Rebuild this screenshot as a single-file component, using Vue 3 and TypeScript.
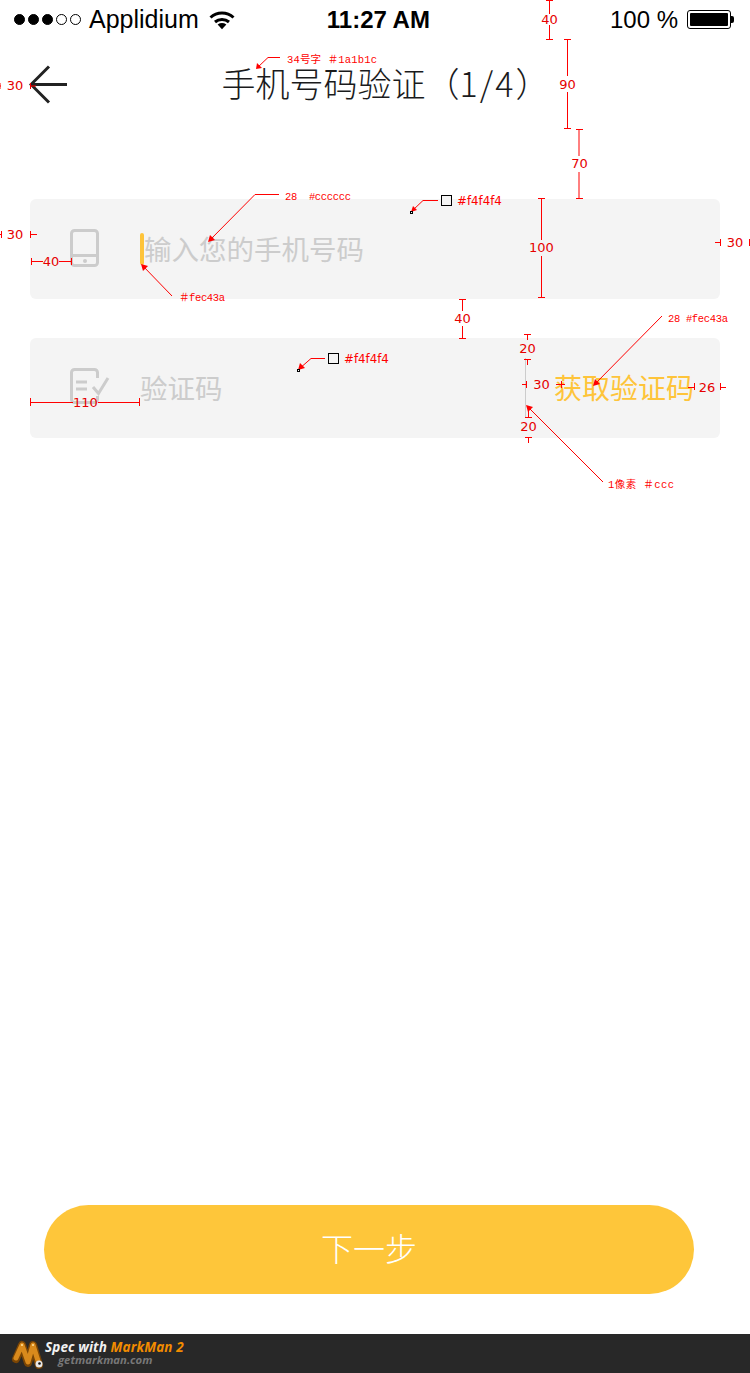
<template>
  <div class="page">
    <div class="status-bar">
      <div class="signal">
        <i v-for="n in 3" :key="'on' + n" class="dot on"></i>
        <i v-for="n in 2" :key="'off' + n" class="dot"></i>
      </div>
      <span class="carrier">Applidium</span>
      <svg class="wifi" width="26" height="20" viewBox="0 0 26 20">
        <path d="M1.5 7.5C8 1.5 18 1.5 24.5 7.5" />
        <path d="M6 12C10 8.5 16 8.5 20 12" />
        <path class="wifi-tip" d="M8.6 14.4C11.5 12.6 14.5 12.6 17.4 14.4L13 19.2Z" />
      </svg>
      <span class="time">11:27 AM</span>
      <span class="percent">100 %</span>
      <div class="battery"><div class="battery-fill"></div></div>
      <div class="battery-nub"></div>
    </div>

    <div class="nav">
      <svg class="back" width="40" height="40" viewBox="0 0 40 40">
        <path d="M20 1.5L2 19.5L20 37.5M2 19.5H38" />
      </svg>
      <h1 class="title">手机号码验证（<span class="title-step">1/4</span>）</h1>
    </div>

    <div class="form">
      <div class="field">
        <svg class="field-icon" width="40" height="40" viewBox="0 0 40 40">
          <rect x="1.5" y="1.5" width="26" height="35" rx="3" />
          <path d="M1.5 26.5H27.5" />
          <circle class="icon-dot" cx="15" cy="32" r="2" />
        </svg>
        <i class="cursor"></i>
        <span class="placeholder">输入您的手机号码</span>
      </div>
      <div class="field">
        <svg class="field-icon" width="40" height="40" viewBox="0 0 40 40">
          <path d="M27.5 10V4.5a3 3 0 0 0-3-3H4.5a3 3 0 0 0-3 3V31.500a3 3 0 0 0 3 3H24.500a3 3 0 0 0 3-3V28" />
          <path d="M6 14H17M6 21H17M23 19L28.500 25.500L38 10" />
        </svg>
        <span class="placeholder code">验证码</span>
        <div class="divider"></div>
        <span class="get-code">获取验证码</span>
      </div>
    </div>

    <div class="spacer"></div>
    <button class="next" type="button">下一步</button>

    <div class="markman">
      <svg class="mm-logo" width="34" height="30" viewBox="0 0 34 30">
        <path class="mm-shadow" d="M6 20L12 6L18 24L23 6L29 26" />
        <path class="mm-body" d="M6 19L12 6L18 23L23 6L29 25" />
        <circle class="mm-rivet" cx="12" cy="6" r="1" />
        <circle class="mm-rivet" cx="23" cy="6" r="1" />
        <circle class="mm-eye" cx="29" cy="25" r="3.500" />
        <circle class="mm-pupil" cx="29.500" cy="24.500" r="1.300" />
      </svg>
      <div class="mm-text">
        <div class="mm-line">Spec with <span class="mm-name">MarkMan 2</span></div>
        <div class="mm-site">getmarkman.com</div>
      </div>
    </div>

    <!-- spec annotations sit on top of the screen -->
    <svg class="marks" width="750" height="1373" viewBox="0 0 750 1373">
      <path class="mark" :d="dimensionPath" />
      <path class="mark" :d="leaderPath" />
      <polygon v-for="(a, i) in arrowHeads" :key="'a' + i" class="head" :points="a" />
      <text v-for="d in dimensionLabels" :key="d.x + '-' + d.y" class="dim-label" :x="d.x" :y="d.y">{{ d.text }}</text>
      <text v-for="n in notes" :key="n.text + n.x" class="note" :x="n.x" :y="n.y" :textLength="n.width" lengthAdjust="spacing">{{ n.text }}</text>
      <rect class="swatch" x="441.500" y="195.500" width="10" height="10" />
      <rect class="swatch" x="328.500" y="353.500" width="10" height="10" />
      <rect class="pin" x="410.500" y="211.500" width="2" height="2" />
      <rect class="pin" x="297.500" y="369.500" width="2" height="2" />
      <text class="hex" x="457" y="205">#f4f4f4</text>
      <text class="hex" x="344" y="363">#f4f4f4</text>
    </svg>
  </div>
</template>

<script setup lang="ts">
interface Label {
  x: number
  y: number
  text: string
  width?: number
}

const dimensionPath = [
  // top column of heights
  'M549.500 0V14M549.500 25V39M546 39.500H553M546 0.500H553',
  'M567.500 40V76M567.500 92V128M564 39.500H571M564 128.500H571',
  'M579 129V156M579 172V198M576 129.500H583M576 198.500H583',
  'M541.500 198V240M541.500 256V297M538 198.500H545M538 297.500H545',
  'M462.500 299V311M462.500 326V338M459 299.500H466M459 338.500H466',
  // get-code box
  'M527.500 334V340M524 334.500H531M527.500 359V365M524 359.500H531',
  'M528.500 408V417M525 417.500H532M528.500 437V443M525 437.500H532',
  'M526.500 381V388M522 384.500H526.500M561.500 381V388M556 384.500H565',
  'M694.500 383V390M688 387.500H694.500M720.500 383V390M720.500 387.500H726',
  // left and right margins
  'M0 83V89M0 86H1M30.500 83V89M30.500 86H36',
  'M1.500 231V238M0 234.500H1.500M30.500 231V238M30.500 234.500H37',
  'M31.500 258V265M31.500 261.500H43M59 261.500H71M71.500 258V265',
  'M30.500 398V406M30.500 402.500H73M98 402.500H139M139.500 398V406',
  'M720.500 239V246M715 242.500H720.500M749.500 239V246',
].join('')

const leaderPath = [
  'M280 57.500H268L257 68',
  'M279 194.500H255L209 241',
  'M172 296L142 265',
  'M438 200.500H423L412 211',
  'M325 358.500H311L299 369',
  'M662 316L594 385',
  'M603 482L527 406',
].join('')

const arrowHeads = [
  '256,69 257,63 262,68',
  '208,242 210,235 215,240',
  '141,264 148,266 143,271',
  '411,212 413,206 417,210',
  '298,370 300,363 305,368',
  '593,386 595,379 600,384',
  '526,405 533,407 528,412',
]

const dimensionLabels: Label[] = [
  { x: 549.5, y: 24, text: '40' },
  { x: 567.5, y: 89, text: '90' },
  { x: 579.5, y: 168, text: '70' },
  { x: 541.5, y: 252, text: '100' },
  { x: 462.5, y: 323, text: '40' },
  { x: 527.5, y: 353, text: '20' },
  { x: 528.5, y: 431, text: '20' },
  { x: 541.5, y: 389, text: '30' },
  { x: 707, y: 392, text: '26' },
  { x: 735, y: 247, text: '30' },
  { x: 15, y: 239, text: '30' },
  { x: 15, y: 90, text: '30' },
  { x: 51, y: 266, text: '40' },
  { x: 85.5, y: 407, text: '110' },
]

const notes: Label[] = [
  { x: 287, y: 63, text: '34号字 ＃1a1b1c', width: 90 },
  { x: 285, y: 200, text: '28\u00a0\u00a0#cccccc', width: 66 },
  { x: 179, y: 301, text: '＃fec43a', width: 46 },
  { x: 668, y: 322, text: '28 #fec43a', width: 60 },
  { x: 608, y: 488, text: '1像素 ＃ccc', width: 66 },
]
</script>

<style scoped>
.page {
  position: relative;
  display: flex;
  flex-direction: column;
  width: 750px;
  height: 1373px;
  overflow: hidden;
  background: #fff;
  font-family: "Liberation Sans", "Noto Sans CJK SC", sans-serif;
}

.status-bar {
  display: flex;
  align-items: center;
  height: 39px;
  padding-left: 14px;
  color: #000;
  font-size: 24px;
}

.signal {
  display: flex;
  gap: 3px;
}

.dot {
  width: 11px;
  height: 11px;
  box-sizing: border-box;
  border: 1px solid #000;
  border-radius: 50%;
}

.dot.on {
  background: #000;
}

.carrier {
  margin-left: 8px;
  font-size: 25px;
}

.wifi {
  margin-left: 10px;
}

.wifi path {
  fill: none;
  stroke: #000;
  stroke-width: 3;
}

.wifi .wifi-tip {
  fill: #000;
  stroke: none;
}

.time {
  margin-left: 92px;
  font-weight: 700;
}

.percent {
  margin-left: 180px;
}

.battery {
  width: 44px;
  height: 19px;
  box-sizing: border-box;
  margin-left: 9px;
  padding: 2px;
  border: 1px solid #000;
  border-radius: 3px;
}

.battery-fill {
  height: 100%;
  border-radius: 1px;
  background: #000;
}

.battery-nub {
  width: 3px;
  height: 7px;
  border-radius: 0 2px 2px 0;
  background: #000;
}

.nav {
  position: relative;
  display: flex;
  align-items: center;
  justify-content: center;
  height: 90px;
  padding-left: 21px;
}

.back {
  position: absolute;
  top: 26px;
  left: 29px;
}

.back path {
  fill: none;
  stroke: #222;
  stroke-width: 3;
}

.title {
  margin: 0 0 4px;
  color: #1a1b1c;
  font-size: 34px;
  font-weight: 300;
  white-space: nowrap;
}

.title-step {
  font-family: "Noto Sans CJK SC", sans-serif;
  letter-spacing: 2px;
}

.form {
  display: flex;
  flex-direction: column;
  gap: 39px;
  margin: 70px 30px 0;
}

.field {
  display: flex;
  align-items: center;
  height: 100px;
  padding-left: 40px;
  border-radius: 6px;
  background: #f4f4f4;
}

.field-icon {
  flex: none;
}

.field-icon rect,
.field-icon path {
  fill: none;
  stroke: #ccc;
  stroke-width: 3;
}

.field-icon .icon-dot {
  fill: #ccc;
}

.cursor {
  width: 4px;
  height: 32px;
  margin-left: 30px;
  border-radius: 2px;
  background: #fec43a;
}

.placeholder {
  margin-bottom: 3px;
  color: #ccc;
  font-size: 27.5px;
}

.placeholder.code {
  margin-left: 30px;
}

.divider {
  width: 1px;
  height: 60px;
  margin-left: auto;
  background: #ccc;
}

.get-code {
  margin: 0 26px 3px 28px;
  color: #fec43a;
  font-size: 28px;
}

.spacer {
  flex: 1;
}

.next {
  width: 650px;
  height: 89px;
  margin: 0 0 40px 44px;
  padding: 0 0 6px;
  border: none;
  border-radius: 45px;
  background: #fec63a;
  color: #fff;
  font-family: inherit;
  font-size: 32px;
  font-weight: 300;
}

.markman {
  display: flex;
  align-items: center;
  height: 39px;
  padding-left: 10px;
  background: #282828;
}

.mm-logo {
  flex: none;
}

.mm-shadow,
.mm-body {
  fill: none;
  stroke-linecap: round;
  stroke-linejoin: round;
}

.mm-shadow {
  stroke: #7a4505;
  stroke-width: 8;
}

.mm-body {
  stroke: #d98a1c;
  stroke-width: 5;
}

.mm-rivet {
  fill: #ffe3a0;
}

.mm-eye {
  fill: #e8e8e8;
}

.mm-pupil {
  fill: #111;
}

.mm-text {
  margin: 0 0 1px 1px;
  font-family: "Open Sans", "Noto Sans", sans-serif;
  font-style: italic;
  font-weight: 700;
  white-space: nowrap;
}

.mm-line {
  color: #f2f2f2;
  font-size: 13.5px;
  line-height: 14px;
  letter-spacing: 0.1px;
}

.mm-name {
  color: #f28c00;
}

.mm-site {
  margin-left: 13px;
  color: #777;
  font-size: 11.3px;
  line-height: 12px;
}

.marks {
  position: absolute;
  top: 0;
  left: 0;
  pointer-events: none;
}

.mark {
  fill: none;
  stroke: #f00;
  stroke-width: 1;
}

.head {
  fill: #f00;
}

.dim-label {
  fill: #e60000;
  font-family: "DejaVu Sans", sans-serif;
  font-size: 13px;
  text-anchor: middle;
}

.note {
  fill: #f00;
  font-family: "Liberation Mono", "Noto Sans CJK SC", monospace;
  font-size: 10.5px;
}

.hex {
  fill: #f00;
  font-family: "DejaVu Sans", sans-serif;
  font-size: 11.8px;
}

.swatch {
  fill: #f4f4f4;
  stroke: #000;
  stroke-width: 1;
}

.pin {
  fill: #fff;
  stroke: #000;
  stroke-width: 1;
}
</style>
